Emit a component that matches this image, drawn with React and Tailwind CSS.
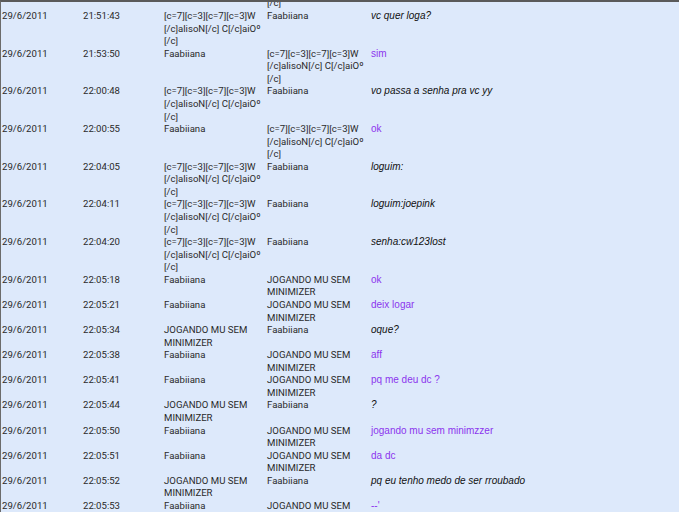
const clan = ["[c=7][c=3][c=7][c=3]W", "[/c]alisoN[/c] C[/c]aiOº", "[/c]"];
const fab = ["Faabiiana"];
const jog = ["JOGANDO MU SEM", "MINIMIZER"];

const rows = [
  { time: "21:51:43", from: clan, to: fab, msg: "vc quer loga?" },
  { time: "21:53:50", from: fab, to: clan, msg: "sim", mine: true },
  { time: "22:00:48", from: clan, to: fab, msg: "vo passa a senha pra vc yy" },
  { time: "22:00:55", from: fab, to: clan, msg: "ok", mine: true },
  { time: "22:04:05", from: clan, to: fab, msg: "loguim:" },
  { time: "22:04:11", from: clan, to: fab, msg: "loguim:joepink" },
  { time: "22:04:20", from: clan, to: fab, msg: "senha:cw123lost" },
  { time: "22:05:18", from: fab, to: jog, msg: "ok", mine: true },
  { time: "22:05:21", from: fab, to: jog, msg: "deix logar", mine: true },
  { time: "22:05:34", from: jog, to: fab, msg: "oque?" },
  { time: "22:05:38", from: fab, to: jog, msg: "aff", mine: true },
  { time: "22:05:41", from: fab, to: jog, msg: "pq me deu dc ?", mine: true },
  { time: "22:05:44", from: jog, to: fab, msg: "?" },
  { time: "22:05:50", from: fab, to: jog, msg: "jogando mu sem minimzzer", mine: true },
  { time: "22:05:51", from: fab, to: jog, msg: "da dc", mine: true },
  { time: "22:05:52", from: jog, to: fab, msg: "pq eu tenho medo de ser rroubado" },
  { time: "22:05:53", from: fab, to: jog, msg: "--'", mine: true },
];

function Lines({ lines }) {
  return (
    <div>
      {lines.map((l, i) => (
        <div key={i} className="whitespace-nowrap">{l}</div>
      ))}
    </div>
  );
}

export default function App() {
  return (
    <div className="h-[512px] w-full overflow-hidden bg-[#dde9fb] border-t-2 border-[#5a5a5a] border-l border-l-[#6b6b6b]">
      <div className="pl-[1px] font-['Roboto',sans-serif] text-[9.6px] leading-[12.56px] text-[#2a2a2a]">
        {/* tail of the row scrolled off the top */}
        <div className="grid grid-cols-[81px_81px_103px_104px_1fr] h-[8px] overflow-hidden">
          <div />
          <div />
          <div />
          <div className="-mt-[5px] whitespace-nowrap">[/c]</div>
        </div>
        {rows.map((r, i) => (
          <div key={i} className="grid grid-cols-[81px_81px_103px_104px_1fr]">
            <div>29/6/2011</div>
            <div>{r.time}</div>
            <Lines lines={r.from} />
            <Lines lines={r.to} />
            <div
              className={
                r.mine
                  ? "font-['Liberation_Sans',sans-serif] text-[10px] text-[#8c35ee] whitespace-nowrap"
                  : "font-['Liberation_Sans',sans-serif] text-[10px] italic text-[#111] whitespace-nowrap"
              }
            >
              {r.msg}
            </div>
          </div>
        ))}
      </div>
    </div>
  );
}
